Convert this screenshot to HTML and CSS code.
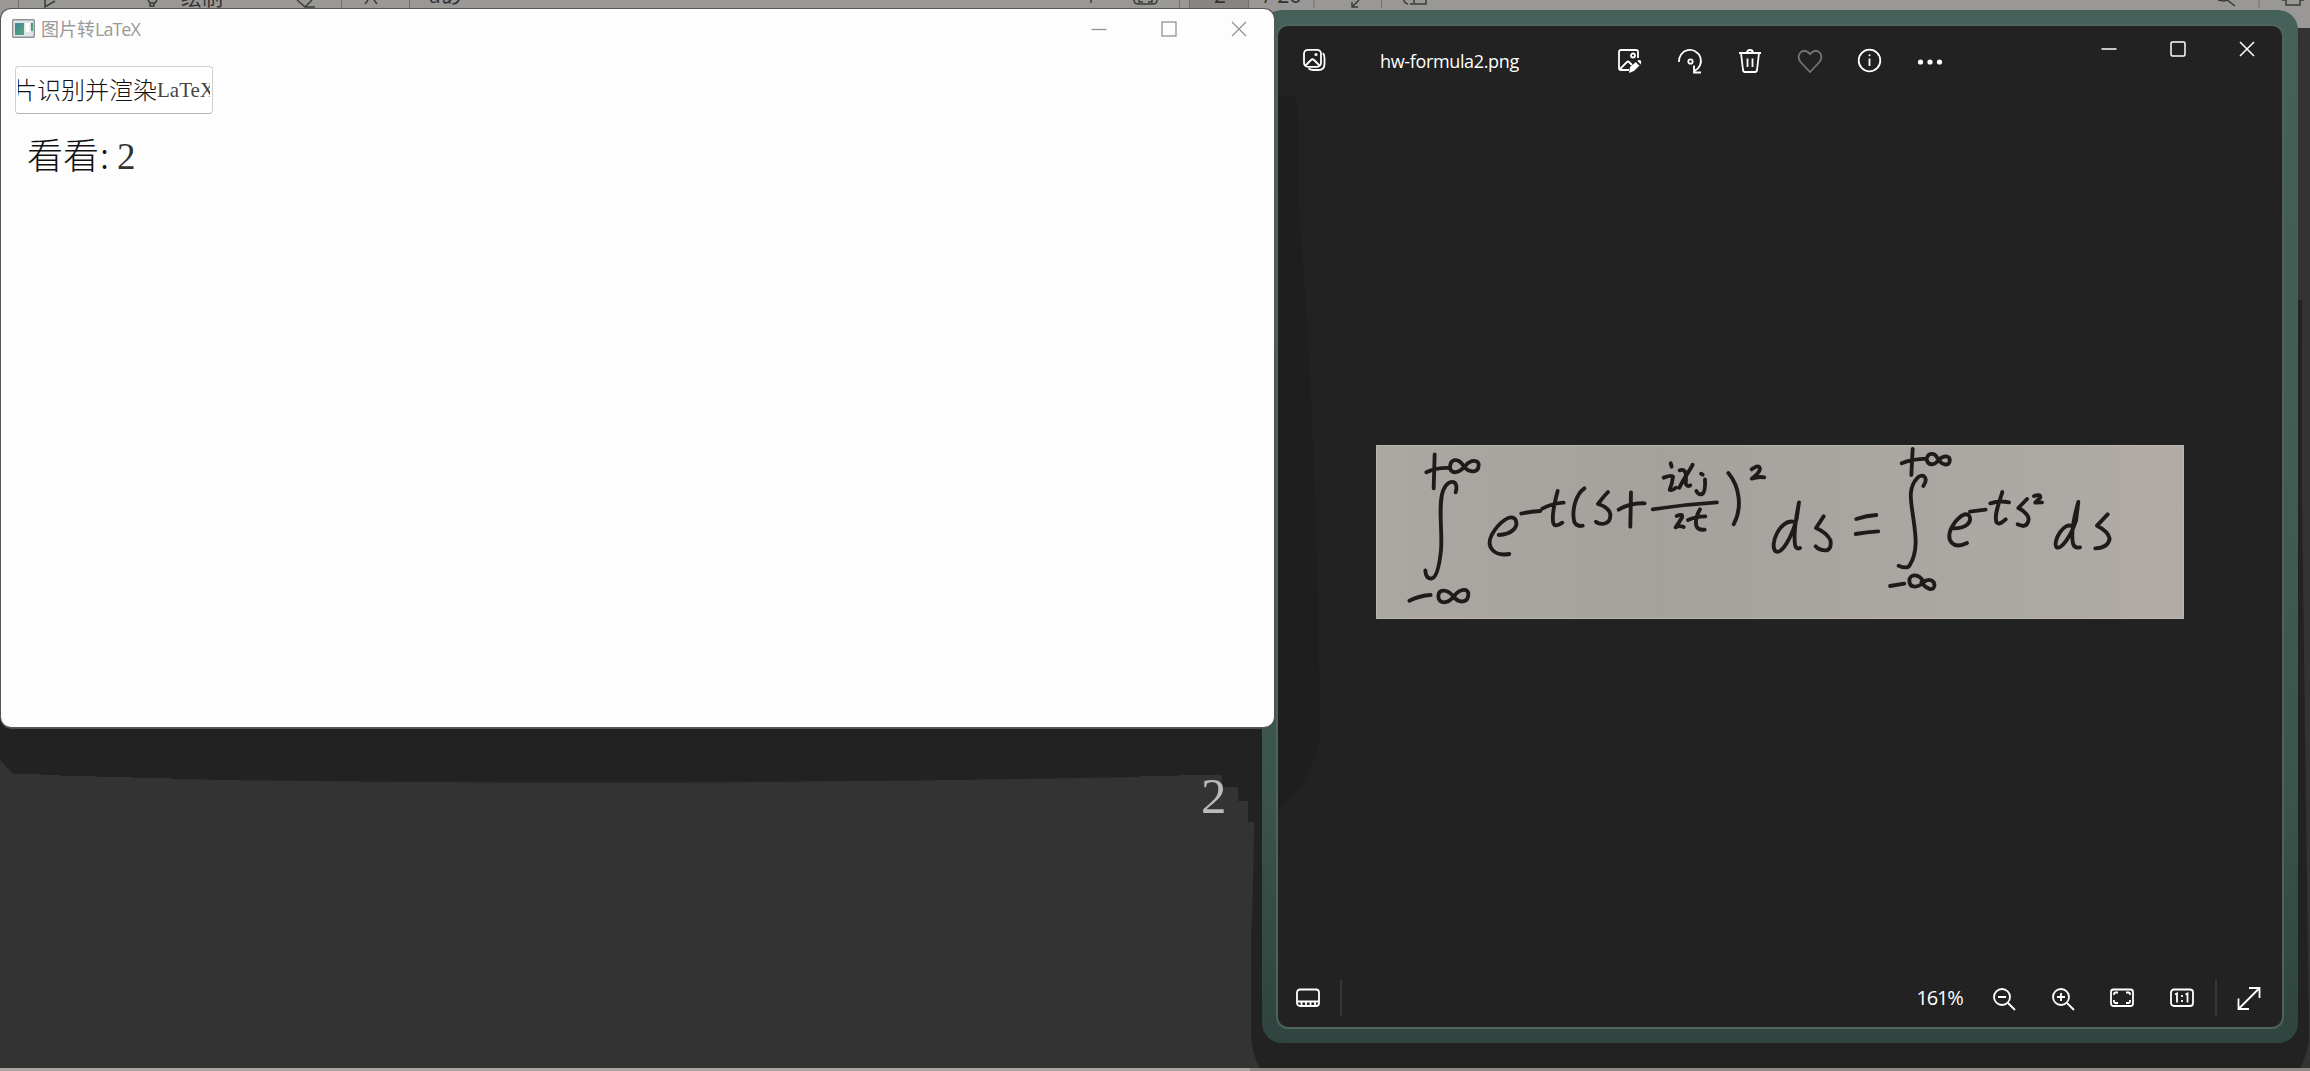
FILE: index.html
```
<!DOCTYPE html>
<html lang="zh-CN">
<head>
<meta charset="utf-8">
<title>图片转LaTeX</title>
<link rel="stylesheet" href="styles.css">
</head>
<body>
<main class="desktop">
  <svg class="reader-bar" width="2310" height="28" viewBox="0 0 2310 28">
    <rect width="2310" height="28" fill="#9a9896"/>
    <rect x="1189" y="0" width="60" height="9" fill="#898582"/>
    <path d="M18.500 0V8M341.500 0V8M409.500 0V8M1179.500 0V8M1189.500 0V9M1248.500 0V9M1314 0V8M1381.500 0V8M2259 0V8" stroke="#72706c" fill="none"/>
    <g fill="none" stroke="#3b3b3a" stroke-width="1.500">
      <path d="M45 0V7L55 1M148 0L150 3H155L157 0M150 3V6H154V3M297 0L305 7L312 0M305 7H315M365 4L368 0M374 0L377 4M1091 0V3M1134 0Q1134 4 1138 4H1153Q1157 4 1157 0M1139 0V2H1143M1148 2H1152V0M1359 0L1352 7M1352 2V7H1358M1404 0Q1404 3 1408 4M1410 4H1413M1414 0V4H1426V0M2218 0L2224 1L2228 0M2227 0L2235 6M2282 0H2286V5H2300V0H2304"/>
    </g>
    <g fill="#333">
      <text class="bar-cjk" x="181" y="5">绘制</text>
      <text class="bar-text" x="429" y="3">aあ</text>
      <text class="bar-text" x="1214" y="3">2</text>
      <text class="bar-text" x="1264" y="3">/ 26</text>
    </g>
  </svg>
  <svg class="shade" width="2310" height="1043" viewBox="0 28 2310 1043">
    <path fill="#222" d="M0 700V760L13 774H41V775H60V776H97V777H134V778H171V779Q600 787 1140 777V776H1178V775H1222V787H1238V801H1248V822H1254V833Q1253 900 1251 940V1035Q1252 1055 1260 1068H2300Q2309 1050 2309 1036L2302 500V300H1200V700Z"/>
    <rect y="1068" width="2310" height="3" fill="#8f8a88"/>
    <rect y="1068" width="1250" height="3" fill="#aaa5a2"/>
  </svg>
  <div class="page-number">2</div>

  <section class="frame">
    <div class="viewer">
      <svg class="cast" width="44" height="715" viewBox="1278 96 44 715"><path fill="#1e1e1e" d="M1278 96H1296L1299 125V212Q1312 360 1318 600L1320 735Q1312 785 1278 810Z"/></svg>
      <header class="viewer-top">
        <svg class="ic gallery" viewBox="0 0 24 24"><rect x="2" y="1.800" width="17" height="17" rx="4"/><path d="M3 18l6-6q1.500-1.500 3 0l6 6M21 5q1.500 2 1.500 5v6q0 6-6 6h-5q-3 0-5-1.500"/><circle cx="14" cy="6.500" r="1.500" class="solid"/></svg>
        <span class="file-name">hw-formula2.png</span>
        <nav class="tools">
          <span><svg class="ic" viewBox="0 0 24 24"><path d="M11 21H3q-2 0-2-2V3q0-2 2-2h15q2 0 2 2v6M2 20l7-7q1-1 2 0l3 3"/><circle cx="15" cy="6.500" r="2"/><path class="solid" d="M11 24l1-6 7-6q3-2 4 0 1 2-1 4l-6 6z"/><path class="cut" d="M18 12l4 4"/></svg></span>
          <span><svg class="ic" viewBox="0 0 24 24"><path d="M1 13A11 11 0 1 1 16.500 22M16 16.500V23.500H23"/><circle cx="12.500" cy="12.500" r="2.200"/></svg></span>
          <span><svg class="ic" viewBox="0 0 24 24"><path d="M1 4H23M9 4q0-3 3-3t3 3M3 4l2 17q.3 2 2 2h10q1.700 0 2-2l2-17M9.500 9.500V18M14.500 9.500V18"/></svg></span>
          <span class="off"><svg class="ic" viewBox="0 0 24 24"><path d="M12 23L2.500 13Q-1 8 2 4 6-1 12 5 18-1 22 4 25 8 21.500 13Z"/></svg></span>
          <span><svg class="ic" viewBox="0 0 24 24"><circle cx="11.500" cy="11.500" r="10.800"/><path d="M11.500 9.500V17"/><circle cx="11.500" cy="6.200" r="1" class="solid"/></svg></span>
          <span><svg class="ic" viewBox="0 0 24 24"><g class="solid"><circle cx="2.500" cy="13" r="2.600"/><circle cx="12" cy="13" r="2.600"/><circle cx="21.500" cy="13" r="2.600"/></g></svg></span>
        </nav>
        <nav class="controls light">
          <span><svg viewBox="0 0 16 16"><path d="M.5 8H15.500"/></svg></span>
          <span><svg viewBox="0 0 16 16"><rect x="1" y="1" width="14" height="14" rx="1.500"/></svg></span>
          <span><svg viewBox="0 0 16 16"><path d="M1 1L15 15M15 1L1 15"/></svg></span>
        </nav>
      </header>

      <div class="stage">
        <svg class="formula" viewBox="18 15 2424 522" preserveAspectRatio="none">
          <defs><linearGradient id="paper"><stop offset="0" stop-color="#aba7a2"/><stop offset=".35" stop-color="#a5a19c"/><stop offset=".6" stop-color="#a9a5a0"/><stop offset="1" stop-color="#b0aba7"/></linearGradient></defs>
          <rect x="18" y="15" width="2424" height="522" fill="url(#paper)"/>
          <rect x="20" y="17" width="2420" height="518" fill="none" stroke="#bcb8b3" stroke-width="3"/>
          <g class="ink">
            <path d="M194 43L191 145M169 97Q200 82 240 84C240 55 265 53 280 77C297 101 325 99 326 76C326 58 303 58 286 77C269 99 242 105 240 82"/>
            <path d="M257 157C268 118 235 115 220 150C203 190 218 280 213 330C209 370 202 413 184 416Q167 416 166 391"/>
            <path d="M118 482Q150 467 182 465M249 468C230 445 205 448 205 469C205 492 232 494 253 468C269 446 296 443 295 464C294 489 267 492 249 468"/>
            <path d="M386 285C425 283 446 262 437 240C425 217 385 248 365 285C347 321 372 350 418 342"/>
            <path d="M454 221Q480 214 511 213M517 206Q546 190 581 188M563 153C553 190 545 230 550 250Q556 263 577 248"/>
            <path d="M643 145C615 165 605 215 613 246Q620 261 638 257M714 156Q700 170 684 192Q717 202 721 223Q722 247 703 251Q685 253 678 245"/>
            <path d="M746 209Q780 188 824 190M783 157L781 260"/>
            <path d="M848 208Q945 193 1041 187" stroke-width="11"/>
            <path d="M902 70L905 80M881 113Q905 104 909 110Q907 130 899 149Q907 153 918 143M929 91C947 85 950 100 947 130Q950 142 961 136M968 74C958 95 943 111 928 143M993 101L998 104M1005 118Q1007 160 994 163Q984 164 979 153"/>
            <path d="M920 228Q940 219 936 233L917 262Q928 255 941 261M954 240Q975 230 1006 229M990 208Q974 235 979 258Q984 271 1004 269"/>
            <path d="M1075 99C1110 140 1117 205 1091 253"/>
            <path d="M1145 88Q1167 71 1170 87Q1168 99 1145 116Q1163 109 1183 112"/>
            <path d="M1269 245C1230 238 1197 315 1217 334C1237 344 1266 288 1280 236L1287 187C1277 238 1270 292 1276 318Q1280 329 1290 324M1361 229L1338 264Q1370 278 1381 300Q1386 325 1370 331Q1349 332 1337 319"/>
            <path d="M1459 237Q1490 226 1519 225M1457 282Q1490 276 1525 274"/>
            <path d="M1628 27L1624 105M1595 70Q1625 57 1670 56C1674 38 1693 36 1703 55C1714 75 1737 80 1739 64C1742 45 1721 45 1706 60C1693 78 1672 77 1670 57"/>
            <path d="M1660 138C1678 111 1656 98 1641 115C1612 145 1624 190 1630 235C1638 290 1644 335 1619 376Q1611 388 1586 377"/>
            <path d="M1560 438L1603 431M1661 426C1647 400 1619 401 1618 422C1619 448 1647 442 1661 426C1675 414 1695 420 1693 438C1690 456 1666 445 1654 426"/>
            <path d="M1748 265C1787 266 1807 247 1798 228C1783 211 1753 243 1741 271C1731 302 1748 330 1791 309M1800 215L1847 209"/>
            <path d="M1861 190Q1888 181 1917 187M1897 156C1888 188 1872 222 1879 246Q1886 258 1907 238M1971 177L1945 204Q1974 219 1976 237Q1974 257 1959 258L1943 253M1992 168Q2011 161 2011 172L1996 188L2016 187"/>
            <path d="M2109 260C2082 241 2048 304 2059 321C2072 333 2103 288 2118 242L2125 186C2112 230 2103 280 2109 311Q2114 326 2130 322M2213 223L2181 257Q2215 274 2219 296Q2214 324 2176 325"/>
          </g>
        </svg>
      </div>

      <footer class="viewer-bottom">
        <span class="film"><svg class="ic" viewBox="0 0 24 24"><rect x="1" y="3.500" width="22" height="16.500" rx="3"/><path d="M1 15.500H23M5.500 16V20M10 16V20M14.500 16V20M19 16V20"/></svg></span>
        <i class="rule"></i>
        <span class="zoom-level">161%</span>
        <span><svg class="ic" viewBox="0 0 24 24"><circle cx="10" cy="11" r="8"/><path d="M6 11H14M16 17L23 24"/></svg></span>
        <span><svg class="ic" viewBox="0 0 24 24"><circle cx="10" cy="11" r="8"/><path d="M6 11H14M10 7V15M16 17L23 24"/></svg></span>
        <span><svg class="ic" viewBox="0 0 24 24"><rect x="1" y="3.500" width="22" height="16.500" rx="2.500"/><path d="M4 9V8q0-1.500 1.500-1.500H8M16 6.500h2.500Q20 6.500 20 8V9M20 14v1.500q0 1.500-1.500 1.500H16M8 17H5.500Q4 17 4 15.500V14"/></svg></span>
        <span><svg class="ic" viewBox="0 0 24 24"><rect x="1" y="3.500" width="22" height="16.500" rx="3"/><path d="M5 8.500L7 7.500V16.500M15.500 8.500L17.500 7.500V16.500M12 9V11M12 14V16"/></svg></span>
        <i class="rule second"></i>
        <span class="expand"><svg class="ic" viewBox="0 0 24 24"><path d="M2 22.500L22 2.500M12 2H22.500V12M1.500 12.500V23H12"/></svg></span>
      </footer>
    </div>
  </section>

  <section class="app">
    <header class="app-title">
      <svg class="app-icon" width="23" height="19" viewBox="0 0 23 19"><defs><linearGradient id="tile" x2="1" y2="1"><stop stop-color="#4381a0"/><stop offset="1" stop-color="#4fae70"/></linearGradient></defs><rect x=".7" y=".7" width="21.600" height="17.600" rx="1" fill="#e2e5e8" stroke="#8e9296" stroke-width="1.400"/><rect x="3" y="4" width="9" height="12" fill="url(#tile)"/><path fill="#fff" d="M13.500 4h4v9h-4z"/><path fill="url(#tile)" d="M19 4h2v8h-2z"/></svg>
      <span class="app-name">图片转<span class="latin">LaTeX</span></span>
      <nav class="controls">
        <span class="min"><svg viewBox="0 0 16 16"><path d="M.5 8.500H15.500"/></svg></span>
        <span><svg viewBox="0 0 16 16"><rect x="1" y="1" width="14" height="14"/></svg></span>
        <span><svg viewBox="0 0 16 16"><path d="M1 1L15 15M15 1L1 15"/></svg></span>
      </nav>
    </header>
    <button class="run">片识别并渲染<span class="tex">LaTeX</span></button>
    <p class="result">看看<span class="colon">:</span><span class="digit">2</span></p>
  </section>
</main>
</body>
</html>
```
FILE: styles.css
```
* { box-sizing: border-box; }
body { margin: 0; background: #333; overflow: hidden; }
.desktop { position: relative; width: 2310px; height: 1071px; background: #333; overflow: hidden; }
.reader-bar, .shade { display: block; }
.bar-text { font: 21px "Open Sans", "Noto Sans CJK SC", sans-serif; }
.bar-cjk { font: 21px "Noto Sans CJK SC", sans-serif; }
.page-number {
  position: absolute; left: 1201px; top: 768px;
  font: 51px/57px "Liberation Serif", serif; color: #bdb9b6;
}

/* photo viewer */
.frame {
  position: absolute; left: 1262px; top: 10px; width: 1036px; height: 1033px;
  padding: 14px; border-radius: 20px;
  background: linear-gradient(#46605a, #425c54 45%, #3b544d 75%, #30453f 98%);
}
.viewer {
  position: relative; display: flex; flex-direction: column; height: 1005px;
  border: 2px solid #4c645d; border-radius: 12px; background: #222; overflow: hidden;
}
.cast { position: absolute; left: 0; top: 70px; }
.ic {
  display: block; width: 24px; height: 24px; overflow: visible;
  fill: none; stroke: #fff; stroke-width: 1.8;
}
.ic .solid { fill: #fff; stroke: none; }
.ic .cut { stroke: #222; }
.off .ic { stroke: #747474; }
.viewer-top { display: flex; height: 70px; padding-left: 24px; color: #fff; }
.gallery { margin-top: 22px; }
.file-name {
  width: 220px; margin: 22px 0 0 54px; white-space: nowrap;
  font: 18px/26px "Open Sans", "Noto Sans", sans-serif; letter-spacing: -.35px;
}
.tools { display: flex; width: 360px; height: 70px; }
.tools span { display: flex; justify-content: center; width: 60px; padding-top: 23px; }
.controls { display: flex; margin-left: auto; }
.controls span { display: flex; align-items: center; justify-content: center; width: 69px; height: 46px; }
.controls svg { width: 16px; height: 16px; fill: none; stroke: #939393; stroke-width: 1.3; }
.controls.light { padding-right: 1px; }
.controls.light span { height: 45px; }
.controls.light svg { stroke: #fff; stroke-width: 1.5; }
.stage { flex: 1; padding: 349px 0 0 98px; }
.formula { display: block; width: 808px; height: 174px; }
.ink { fill: none; stroke: #1d1c1b; stroke-width: 11.5; stroke-linecap: round; stroke-linejoin: round; }
.viewer-bottom { display: flex; align-items: center; height: 60px; padding-top: 1px; color: #fff; }
.viewer-bottom span { display: flex; justify-content: center; width: 60px; }
.viewer-bottom .film { width: 63px; padding-right: 3px; }
.rule { width: 2px; height: 36px; background: #373737; }
.viewer-bottom .zoom-level {
  justify-content: flex-start; width: 58px; margin-left: 574px;
  font: 20px/28px "Open Sans", "Noto Sans", sans-serif; letter-spacing: -1.2px;
}
.rule.second { margin-left: 3px; }
.viewer-bottom .expand { width: 66px; }

/* recognition tool */
.app {
  position: absolute; left: 1px; top: 9px; width: 1273px; height: 718px;
  border-radius: 10px; background: #fdfdfd; box-shadow: 0 0 0 1px #555, 0 2px 0 #505050;
}
.app-title { display: flex; height: 41px; padding: 10px 0 0 11px; }
.app-name {
  margin: -3px 0 0 6px; white-space: nowrap; color: #999;
  font: 18px/24px "Noto Sans CJK SC", sans-serif;
}
.latin { font-family: "Open Sans", sans-serif; letter-spacing: -1px; }
.app-title .controls { height: 41px; margin-top: -10px; }
.app-title .controls span { height: 40px; width: 70px; }
.run {
  display: flex; justify-content: center; align-items: center;
  width: 198px; height: 48px; margin: 16px 0 0 14px; padding: 0 2px 2px;
  overflow: hidden; overflow: clip; overflow-clip-margin: content-box;
  border: 1px solid #d0d0d0; border-bottom-color: #b5b5b5; border-radius: 4px; background: #fff;
  font: 300 24px/30px "Noto Sans CJK SC", sans-serif; white-space: nowrap; color: #111;
}
.tex { font: 21px/30px "Liberation Serif", serif; color: #444; padding-top: 2px; }
.result {
  display: flex; align-items: baseline; margin: 13px 0 0 26px;
  font: 300 36px/52px "Noto Sans CJK SC", sans-serif; color: #111;
}
.colon { width: 18px; padding-left: 1px; }
.digit { font-family: "Liberation Serif", serif; font-size: 37px; color: #333; }
```
